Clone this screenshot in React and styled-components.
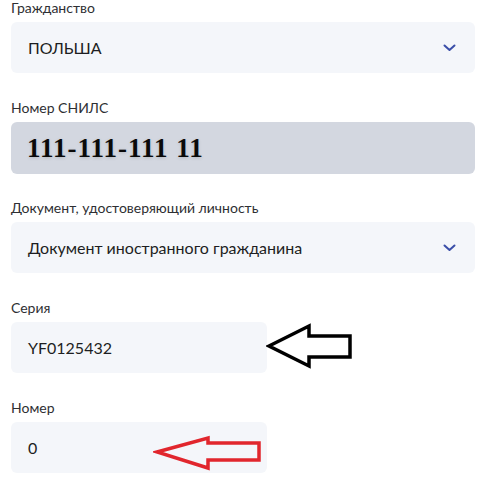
import React from 'react';
import styled, { createGlobalStyle } from 'styled-components';

const GlobalStyle = createGlobalStyle`
  body {
    margin: 0;
    background: #fff;
    font-family: Lato, "Noto Sans", sans-serif;
  }
`;

const Form = styled.div`
  padding: 0 11px;
  display: flex;
  flex-direction: column;
  gap: 27px;
`;

const Field = styled.div`
  position: relative;
  display: flex;
  flex-direction: column;
  gap: 6px;
`;

const Label = styled.div`
  font-size: 14px;
  line-height: 16px;
  color: #2e2f33;
`;

const Box = styled.div`
  box-sizing: border-box;
  width: ${(p) => (p.$short ? '256px' : '464px')};
  height: ${(p) => (p.$locked ? '52px' : '51px')};
  margin-bottom: ${(p) => (p.$locked ? '-1px' : '0')};
  padding: 0 19px 0 17px;
  border-radius: 6px;
  background: ${(p) => (p.$locked ? '#d3d7e0' : '#f4f6fa')};
  display: flex;
  align-items: center;
  justify-content: space-between;
`;

const Value = styled.span`
  font-size: 16px;
  color: #1d1e22;
`;

const Snils = styled.span`
  font-family: "Liberation Serif", serif;
  font-weight: bold;
  font-size: 27px;
  letter-spacing: 1px;
  color: #0a0a0a;
  margin-left: -1px;
  text-shadow: 0 1px 3px rgba(90, 90, 90, 0.25);
`;

const Pointer = styled.svg`
  position: absolute;
  left: ${(p) => p.$left}px;
  top: ${(p) => p.$top}px;
`;

const Chevron = () => (
  <svg width="13" height="8" viewBox="0 0 13 8">
    <path d="M1.5 1.5 L6.5 6 L11.5 1.5" fill="none" stroke="#3a4ea8" strokeWidth="2" strokeLinecap="round" strokeLinejoin="round" />
  </svg>
);

const App = () => {
  return (
    <>
      <GlobalStyle />
      <Form>
        <Field>
          <Label>Гражданство</Label>
          <Box>
            <Value>ПОЛЬША</Value>
            <Chevron />
          </Box>
        </Field>
        <Field>
          <Label>Номер СНИЛС</Label>
          <Box $locked>
            <Snils>111-111-111 11</Snils>
          </Box>
        </Field>
        <Field>
          <Label>Документ, удостоверяющий личность</Label>
          <Box>
            <Value>Документ иностранного гражданина</Value>
            <Chevron />
          </Box>
        </Field>
        <Field>
          <Label>Серия</Label>
          <Box $short>
            <Value>YF0125432</Value>
          </Box>
          <Pointer $left={255} $top={23} width="90" height="48" viewBox="0 0 90 48">
            <polygon
              points="3,23 43,3 43,13 84,13 84,34 43,34 43,43"
              fill="none"
              stroke="#000"
              strokeWidth="3.5"
              strokeLinejoin="miter"
            />
          </Pointer>
        </Field>
        <Field>
          <Label>Номер</Label>
          <Box $short>
            <Value>0</Value>
          </Box>
          <Pointer $left={142} $top={34} width="112" height="40" viewBox="0 0 112 40">
            <polygon
              points="4,18 55,4 55,9 106,9 106,26 55,26 55,34"
              fill="none"
              stroke="#e1262d"
              strokeWidth="3.5"
              strokeLinejoin="miter"
            />
          </Pointer>
        </Field>
      </Form>
    </>
  );
};

export default App;
